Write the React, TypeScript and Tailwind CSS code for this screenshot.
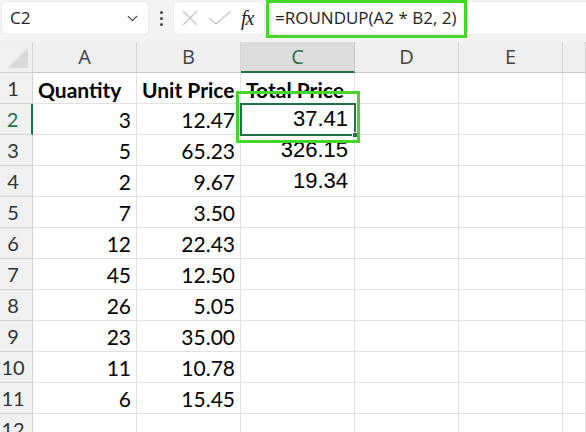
import { ChevronDown } from "lucide-react"

const cols = ["A", "B", "C", "D", "E", ""]

const rows: [string, string, string][] = [
  ["3", "12.47", "37.41"],
  ["5", "65.23", "326.15"],
  ["2", "9.67", "19.34"],
  ["7", "3.50", ""],
  ["12", "22.43", ""],
  ["45", "12.50", ""],
  ["26", "5.05", ""],
  ["23", "35.00", ""],
  ["11", "10.78", ""],
  ["6", "15.45", ""],
]

const gridCols = "grid grid-cols-[33px_104px_104px_114px_104px_104px_1fr]"

function RowHead({ n, active }: { n: number; active?: boolean }) {
  return (
    <div
      className={
        "h-[31px] flex items-center justify-center pr-[6px] text-[20px] bg-[#f0f0f0] border-b border-[#d4d4d4] " +
        (active
          ? "text-[#1e7145] border-r-2 border-r-[#1e7145]"
          : "text-[#333] border-r border-r-[#d4d4d4]")
      }
    >
      {n}
    </div>
  )
}

function Cell({
  children,
  bold,
  arial,
}: {
  children?: React.ReactNode
  bold?: boolean
  arial?: boolean
}) {
  return (
    <div
      className={
        "h-[31px] flex items-end whitespace-nowrap border-r border-b border-[#e1e1e1] text-black " +
        (bold
          ? "justify-start pl-[5px] pb-[3px] font-bold text-[21px] leading-none overflow-visible z-10"
          : arial
            ? "justify-end pr-[6px] pb-[4px] text-[22px] font-['Liberation_Sans',Arial,sans-serif] leading-none"
            : "justify-end pr-[5px] pb-[4px] text-[21px] leading-none")
      }
    >
      {children}
    </div>
  )
}

export default function App() {
  return (
    <div className="w-[586px] h-[432px] overflow-hidden relative bg-[#f3f3f3] font-['Lato','Open_Sans',sans-serif]">
      {/* Toolbar */}
      <div className="h-[42px] flex items-start pt-[2px] font-['Open_Sans',sans-serif]">
        <div className="ml-[2px] w-[146px] h-[32px] bg-white rounded-[5px] flex items-center pl-[8px] pr-[7px] shadow-[0_0_0_1px_#ececec]">
          <span className="text-[17px] text-[#222] flex-1">C2</span>
          <ChevronDown className="w-[17px] h-[17px] text-[#444]" strokeWidth={1.8} />
        </div>
        <div className="w-[26px] h-[32px] flex flex-col items-center justify-center gap-[3px]">
          <span className="w-[3px] h-[3px] bg-[#444] rounded-full" />
          <span className="w-[3px] h-[3px] bg-[#444] rounded-full" />
          <span className="w-[3px] h-[3px] bg-[#444] rounded-full" />
        </div>
        <div className="w-[90px] h-[32px] bg-white rounded-[5px] flex items-center pl-[8px] shadow-[0_0_0_1px_#ececec]">
          <svg width="16" height="16" viewBox="0 0 16 16" className="shrink-0">
            <path d="M1 1L15 15M15 1L1 15" stroke="#c6c6c6" strokeWidth="1.3" fill="none" />
          </svg>
          <svg width="24" height="16" viewBox="0 0 24 16" className="ml-[10px] shrink-0">
            <path d="M1 8L8 14L23 1" stroke="#c6c6c6" strokeWidth="1.3" fill="none" />
          </svg>
          <span className="ml-[9px] italic text-[20px] text-[#222] font-['Liberation_Serif',serif] tracking-[-1px]">
            fx
          </span>
        </div>
        <div className="ml-[8px] flex-1 h-[32px] bg-white rounded-l-[5px] flex items-center pl-[3px] shadow-[0_0_0_1px_#ececec]">
          <span className="text-[17px] text-[#222]">=ROUNDUP(A2 * B2, 2)</span>
        </div>
      </div>

      {/* Sheet */}
      <div className={gridCols + " bg-white"}>
        <div className="h-[31px] bg-[#f0f0f0] border-r border-b border-[#d4d4d4] relative">
          <div className="absolute right-[4px] bottom-[4px] w-0 h-0 border-l-[20px] border-l-transparent border-b-[20px] border-b-[#dadada]" />
        </div>
        {cols.map((c, i) => (
          <div
            key={i}
            className={
              "h-[31px] flex items-center justify-center text-[20px] font-['Open_Sans',sans-serif] " +
              (c === "C"
                ? "bg-[#dcdcdc] text-[#1e7145] border-r border-r-[#c8c8c8] border-b-2 border-b-[#1e7145]"
                : "bg-[#efefef] text-[#444] border-r border-r-[#d4d4d4] border-b border-b-[#c8c8c8]")
            }
          >
            {c}
          </div>
        ))}

        <RowHead n={1} />
        <Cell bold>Quantity</Cell>
        <Cell bold>Unit Price</Cell>
        <Cell bold>Total Price</Cell>
        <Cell />
        <Cell />
        <Cell />

        {rows.map((r, i) => (
          <div key={i} className="contents">
            <RowHead n={i + 2} active={i === 0} />
            <Cell>{r[0]}</Cell>
            <Cell>{r[1]}</Cell>
            <Cell arial>{r[2]}</Cell>
            <Cell />
            <Cell />
            <Cell />
          </div>
        ))}

        <RowHead n={12} />
        <Cell />
        <Cell />
        <Cell />
        <Cell />
        <Cell />
        <Cell />
      </div>

      {/* Active cell C2 */}
      <div className="absolute left-[240px] top-[103px] w-[116px] h-[33px] border-2 border-[#1e7145] pointer-events-none z-20">
        <div className="absolute -right-[4px] -bottom-[4px] w-[6px] h-[6px] bg-[#1e7145] border border-white" />
      </div>

      {/* Highlight annotations */}
      <div className="absolute left-[266px] top-0 w-[201px] h-[38px] border-[3px] border-[#45d62a] pointer-events-none z-30" />
      <div className="absolute left-[236px] top-[91px] w-[124px] h-[52px] border-[3px] border-[#45d62a] pointer-events-none z-30" />
    </div>
  )
}
